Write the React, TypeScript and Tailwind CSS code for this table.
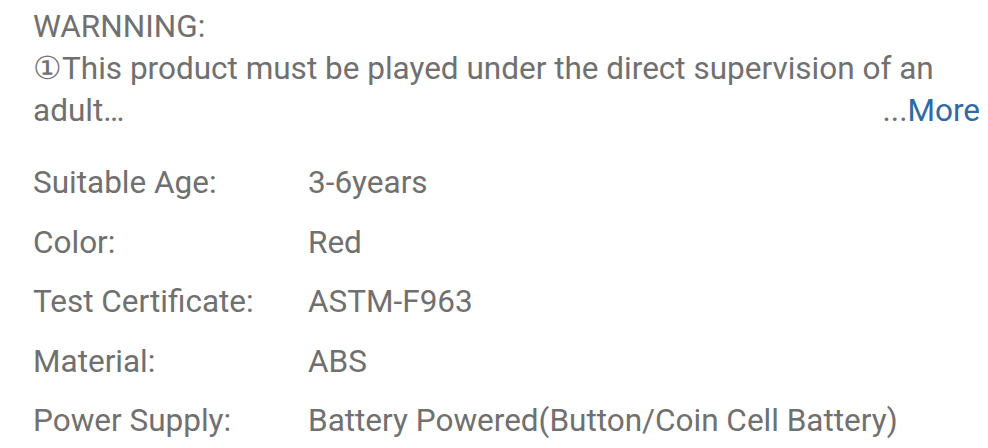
import React from "react";

const rows: [string, string][] = [
  ["Suitable Age:", "3-6years"],
  ["Color:", "Red"],
  ["Test Certificate:", "ASTM-F963"],
  ["Material:", "ABS"],
  ["Power Supply:", "Battery Powered(Button/Coin Cell Battery)"],
];

export default function App() {
  return (
    <div
      className="w-[988px] h-[448px] bg-white overflow-hidden text-[31.5px] text-[#707070] pl-[33px] pr-[8px]"
      style={{ fontFamily: "Roboto, sans-serif" }}
    >
      <div className="leading-[42px] pt-[6px]">
        <div>WARNNING:</div>
        <div className="whitespace-nowrap">①This product must be played under the direct supervision of an</div>
        <div className="flex justify-between">
          <span>adult…</span>
          <span>
            ...<span className="text-[#2e6aa6]">More</span>
          </span>
        </div>
      </div>
      <div className="mt-[21px] flex flex-col">
        {rows.map(([k, v]) => (
          <div key={k} className="flex h-[59.5px] items-center">
            <div className="w-[275px] shrink-0">{k}</div>
            <div className="whitespace-nowrap">{v}</div>
          </div>
        ))}
      </div>
    </div>
  );
}
